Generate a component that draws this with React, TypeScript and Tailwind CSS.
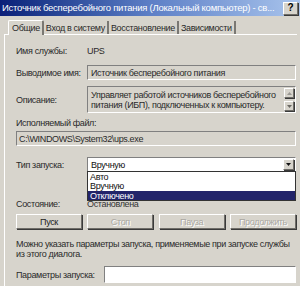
import { ReactNode } from "react";

const inset =
  "border border-t-[#808080] border-l-[#808080] border-b-white border-r-white";
const raised =
  "border border-t-white border-l-white border-b-[#6f6d68] border-r-[#6f6d68] shadow-[1px_1px_0_#3a3a3a]";

function Row({ label, children, className = "" }: { label: string; children: ReactNode; className?: string }) {
  return (
    <div className={`flex items-center ${className}`}>
      <div className="w-[71px] shrink-0 whitespace-nowrap">{label}</div>
      <div className="flex-1 min-w-0">{children}</div>
    </div>
  );
}

function Btn({ label, disabled }: { label: string; disabled?: boolean }) {
  return (
    <div
      className={`w-[66px] h-[15px] flex items-center justify-center ${raised} ${
        disabled ? "text-[#aaa8a2] [text-shadow:1px_1px_0_#fff]" : "text-[#222]"
      }`}
    >
      {label}
    </div>
  );
}

export default function App() {
  return (
    <div
      className="w-[300px] h-[286px] overflow-hidden bg-[#d7d4cc] text-[#2a2a2a] text-[9px] leading-[10px] tracking-[-0.35px]"
      style={{ fontFamily: '"Liberation Sans", Arial, sans-serif' }}
    >
      {/* Title bar */}
      <div className="h-[16px] flex items-center pl-[2px] pr-[2px] bg-gradient-to-r from-[#0c1f78] via-[#5d7fc6] to-[#a9c4ec]">
        <div className="flex-1 text-white text-[9.5px] leading-[12px] whitespace-nowrap overflow-hidden tracking-[-0.25px]">
          Источник бесперебойного питания (Локальный компьютер) - св...
        </div>
        <div className={`w-[15px] h-[13px] bg-[#d7d4cc] ${raised} flex items-center justify-center text-black font-bold text-[10px]`}>
          ?
        </div>
      </div>

      {/* Tabs */}
      <div className="flex items-end pl-[8px] mt-[3px] h-[15px]">
        <div className="h-[15px] pl-[3px] pr-[2px] flex items-center border-t border-l border-white border-r-[2px] border-r-[#7a7873] rounded-t-[2px] relative z-10 bg-[#d7d4cc] -mb-[1px]">
          Общие
        </div>
        <div className="h-[13px] px-[2px] flex items-center border-r-[2px] border-r-[#7a7873]">Вход в систему</div>
        <div className="h-[13px] px-[2px] flex items-center border-r-[2px] border-r-[#7a7873]">Восстановление</div>
        <div className="h-[13px] px-[2px] flex items-center border-r-[2px] border-r-[#7a7873]">Зависимости</div>
      </div>

      {/* Panel */}
      <div className="ml-[4px] mr-[3px] border-t border-l border-white pl-[11px] pr-[1px] pt-[11px] h-[260px] flex flex-col">
        <Row label="Имя службы:" className="h-[10px] shrink-0">UPS</Row>

        <Row label="Выводимое имя:" className="mt-[9px] shrink-0">
          <div className={`h-[15px] ${inset} pl-[3px] flex items-center`}>Источник бесперебойного питания</div>
        </Row>

        <Row label="Описание:" className="mt-[6px] shrink-0">
          <div className={`h-[27px] ${inset} pl-[3px] flex`}>
            <div className="flex-1 pt-[3px] leading-[10px] whitespace-nowrap overflow-hidden">
              Управляет работой источников бесперебойного
              <br />
              питания (ИБП), подключенных к компьютеру.
            </div>
            <div className="w-[10px] mr-[1px] mt-[1px] flex flex-col gap-[3px]">
              <div className={`h-[10px] ${raised} flex items-center justify-center`}>
                <svg width="5" height="3" viewBox="0 0 5 3"><path d="M2.5 0 L5 3 L0 3 Z" fill="#9a9893" /></svg>
              </div>
              <div className={`h-[10px] ${raised} flex items-center justify-center`}>
                <svg width="5" height="3" viewBox="0 0 5 3"><path d="M0 0 L5 0 L2.5 3 Z" fill="#6a6863" /></svg>
              </div>
            </div>
          </div>
        </Row>

        <div className="mt-[5px] h-[10px] shrink-0">Исполняемый файл:</div>
        <div className={`mt-[3px] h-[15px] shrink-0 ${inset} pl-[2px] flex items-center`}>C:\WINDOWS\System32\ups.exe</div>

        {/* combo with open list */}
        <div className="relative mt-[11px] h-[15px] shrink-0 z-20">
          <Row label="Тип запуска:">
            <div className={`h-[15px] bg-white ${inset} pl-[3px] flex items-center`}>
              <div className="flex-1 text-[#111]">Вручную</div>
              <div className={`w-[11px] h-[11px] mr-[1px] bg-[#d7d4cc] ${raised} flex items-center justify-center`}>
                <svg width="5" height="3" viewBox="0 0 5 3"><path d="M0 0 L5 0 L2.5 3 Z" fill="#111" /></svg>
              </div>
            </div>
          </Row>
          <div className="absolute left-[71px] right-0 top-[14px] h-[30px] bg-white border border-[#333] text-[#111]">
            <div className="h-[9px] pl-[2px] flex items-center">Авто</div>
            <div className="h-[10px] pl-[2px] flex items-center">Вручную</div>
            <div className="h-[9px] pl-[2px] flex items-center bg-[#22246a] text-white">Отключено</div>
          </div>
        </div>

        <div className="h-[27px] shrink-0" />
        <Row label="Состояние:" className="h-[10px] shrink-0">
          <span className="text-[#333]">Остановлена</span>
        </Row>

        <div className="flex justify-between mt-[5px] shrink-0">
          <Btn label="Пуск" />
          <Btn label="Стоп" disabled />
          <Btn label="Пауза" disabled />
          <Btn label="Продолжить" disabled />
        </div>

        <div className="mt-[10px] leading-[10px] whitespace-nowrap shrink-0">
          Можно указать параметры запуска, применяемые при запуске службы
          <br />
          из этого диалога.
        </div>

        <div className="flex items-center mt-[7px] shrink-0">
          <div className="w-[88px] shrink-0 whitespace-nowrap">Параметры запуска:</div>
          <div className={`flex-1 h-[17px] bg-white ${inset}`} />
        </div>
      </div>
    </div>
  );
}
